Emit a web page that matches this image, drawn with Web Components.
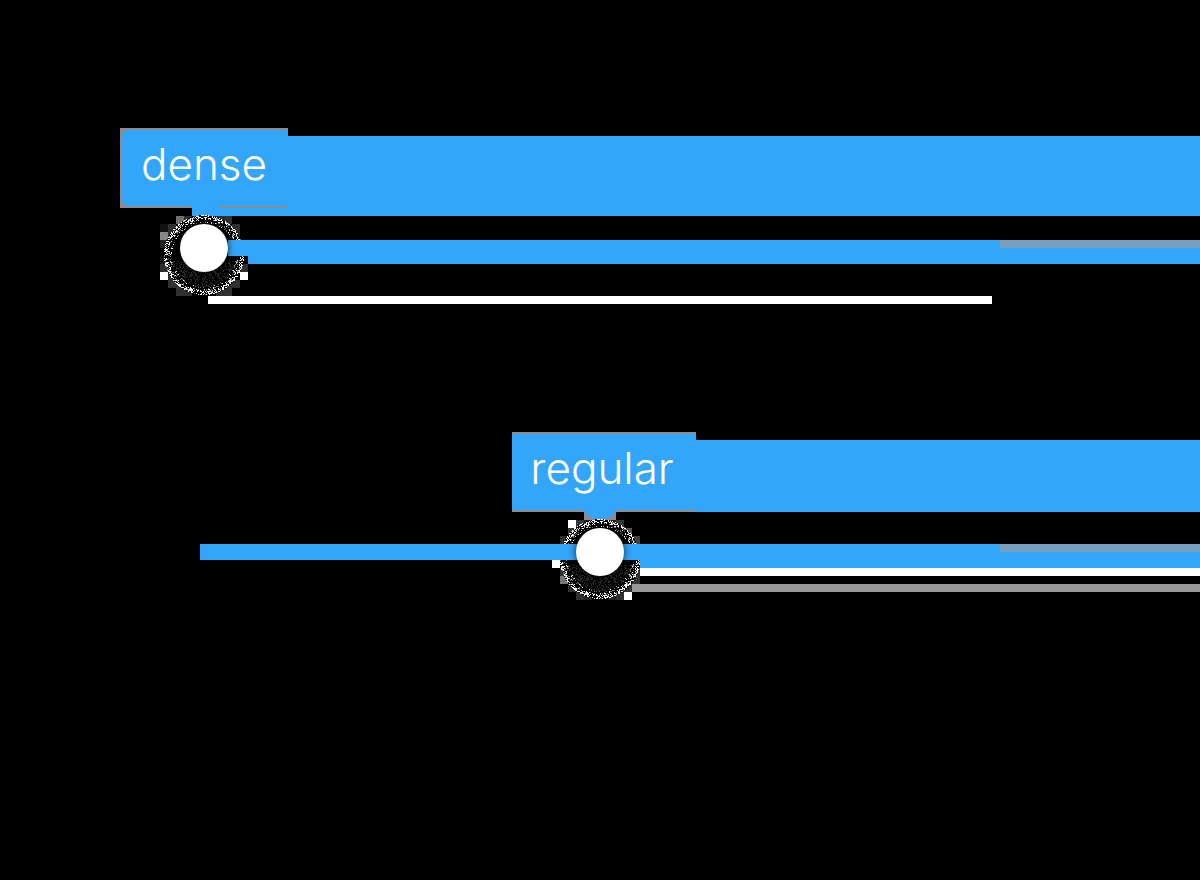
<!DOCTYPE html>
<html lang="en">
<head>
<meta charset="utf-8">
<meta name="viewport" content="width=device-width, initial-scale=1">
<title>Sliders</title>
<style>
  html { background: #000; }
  body { margin: 0; background: #000; font-family: Inter, "Liberation Sans", sans-serif; }
</style>
</head>
<body>
<slider-page>
  <slider-row variant="dense" value="0">dense</slider-row>
  <slider-row variant="regular" value="50">regular</slider-row>
</slider-page>

<template id="page-template">
  <style>
    :host { display: block; }
    main { display: grid; gap: 120px; padding: 128px 0; overflow: hidden; }
  </style>
  <main><slot></slot></main>
</template>

<template id="row-template">
  <style>
    :host {
      display: block; --blue: #33a5fa; --edge: #8c8c8c;
      --tag-start: 10%; --tag-width: 168px; --strip-start: 16%; --strip-height: 80px;
      --bar-start: 19%; --bar-mid: 1.667vw; --thumb: 17%;
    }
    :host([variant="regular"]) {
      --tag-start: 42.667%; --tag-width: 184px; --strip-start: 42.667%; --strip-height: 72px;
      --bar-start: 16.667%; --bar-mid: 36.667vw; --thumb: 50%;
    }
    .callout, .rail { display: grid; }
    .callout > *, .rail > * { grid-area: 1 / 1; }
    .callout { height: 88px; align-items: start; }
    .strip { margin: 8px 0 0 var(--strip-start); height: var(--strip-height); background: var(--blue); }
    .tag {
      position: relative; display: grid; box-sizing: border-box; margin-left: var(--tag-start);
      width: var(--tag-width); height: 80px; padding: 2px 0 2px 2px; background: var(--edge);
    }
    :host([variant="regular"]) .tag { padding-left: 0; }
    label {
      background: var(--blue); border-radius: 6px 0 0 6px; color: #fff; padding-right: 2px;
      font-size: 44px; font-weight: 350; line-height: 68px; text-align: center;
    }
    :host([variant="regular"]) label { border-radius: 0; padding-right: 4px; }
    .pointer { position: absolute; left: 72px; top: 78px; width: 32px; height: 10px; }
    .rail { position: relative; height: 96px; align-items: start; }
    .halo { position: absolute; left: calc(var(--thumb) - 48px); top: -16px; width: 96px; height: 96px; }
    .bars {
      position: relative; display: flex; align-items: flex-start;
      margin-top: 24px; padding-left: var(--bar-start);
    }
    .bars i { flex: 0 0 var(--bar-mid); height: 16px; background: var(--blue); }
    .bars b {
      flex: 1; height: 24px; display: flex; justify-content: flex-end; background: var(--blue);
    }
    .bars u { width: 16.667vw; height: 8px; background: #789fbf; }
    .lines { display: grid; gap: 8px; margin-top: 80px; padding: 0 17.333% 0 17.333%; }
    .lines i { height: 8px; background: #fff; }
    .lines b { display: none; height: 8px; background: #999; }
    :host([variant="regular"]) .lines { margin-top: 48px; padding: 0 0 0 52.667%; }
    :host([variant="regular"]) .lines i { margin-left: 8px; }
    :host([variant="regular"]) .lines b { display: block; }
    input {
      position: relative; appearance: none; width: 70%; height: 48px;
      margin: 8px 15% 0; background: transparent; cursor: pointer;
    }
    input::-webkit-slider-thumb {
      appearance: none; width: 48px; height: 48px; border: 0; border-radius: 50%;
      background: #fff; box-shadow: 0 0 6px 1px rgba(0, 0, 0, .6);
    }
    input:focus-visible { outline: 2px solid #fff; outline-offset: 8px; }
  </style>
  <div class="callout">
    <div class="strip"></div>
    <div class="tag">
      <label for="range"><slot></slot></label>
      <svg class="pointer" viewBox="0 0 32 10" aria-hidden="true"></svg>
    </div>
  </div>
  <div class="rail">
    <svg class="halo" viewBox="0 0 96 96" shape-rendering="crispEdges" aria-hidden="true"></svg>
    <div class="bars"><i></i><b><u></u></b></div>
    <div class="lines"><i></i><b></b></div>
    <input id="range" type="range" min="0" max="100">
  </div>
</template>

<script>
  const clone = id => document.getElementById(id).content.cloneNode(true);

  // Square cells around the grainy ring: x, y, fill, relative to the halo box.
  const cells = {
    dense: [
      [20,16,'#707070'],[28,16,'#303030'],[60,16,'#303030'],[68,16,'#303030'],
      [12,24,'#303030'],[76,24,'#303030'],[4,24,'#111'],[4,32,'#858585'],[12,32,'#303030'],[76,32,'#303030'],
      [4,40,'#222'],[4,56,'#151515'],[4,64,'#303030'],[4,72,'#fff'],[84,64,'#303030'],[84,72,'#fff'],
      [12,72,'#303030'],[12,80,'#303030'],[76,80,'#303030'],[20,80,'#303030'],[68,80,'#303030'],
      [20,88,'#303030'],[28,88,'#303030'],[60,88,'#303030'],[68,88,'#303030']
    ],
    regular: [
      [16,16,'#fff'],[24,16,'#383838'],[32,16,'#222'],[56,16,'#222'],[64,16,'#383838'],
      [16,24,'#383838'],[72,24,'#555'],[8,32,'#303030'],[16,32,'#222'],[80,32,'#444'],
      [0,56,'#fff'],[8,64,'#303030'],[8,72,'#777'],[80,64,'#303030'],[80,72,'#333'],
      [16,80,'#303030'],[72,80,'#303030'],[24,88,'#303030'],[32,88,'#222'],
      [56,88,'#222'],[64,88,'#303030'],[72,88,'#fff']
    ]
  };

  function grain() {
    let seed = 7;
    const random = () => {
      seed = (seed + 0x6d2b79f5) | 0;
      let t = Math.imul(seed ^ (seed >>> 15), 1 | seed);
      t = (t + Math.imul(t ^ (t >>> 7), 61 | t)) ^ t;
      return ((t ^ (t >>> 14)) >>> 0) / 4294967296;
    };
    const dots = { white: '', grey: '', dark: '' };
    for (let y = 15; y < 96; y++) {
      for (let x = 8; x < 88; x++) {
        const r = Math.hypot(x + .5 - 48, y + .5 - 55), n = random();
        if (r > 40) continue;
        const dot = `M${x} ${y}h1v1h-1z`;
        if (r > 36) {
          if (n < .42) dots.white += dot;
          else if (n < .52) dots.grey += dot;
        } else if (r > 32) {
          if (n < .1) dots.white += dot;
          else if (n < .25) dots.grey += dot;
        } else if (y > 60 && n < .35) dots.dark += dot;
      }
    }
    return `<circle cx="48" cy="55" r="40"/>
      <path fill="#fff" d="${dots.white}"/>
      <path fill="#777" d="${dots.grey}"/>
      <path fill="#282828" d="${dots.dark}"/>`;
  }

  customElements.define('slider-page', class extends HTMLElement {
    constructor() {
      super();
      this.attachShadow({ mode: 'open' }).append(clone('page-template'));
    }
  });

  customElements.define('slider-row', class extends HTMLElement {
    constructor() {
      super();
      this.attachShadow({ mode: 'open' }).append(clone('row-template'));
    }
    connectedCallback() {
      const root = this.shadowRoot;
      const variant = this.getAttribute('variant');
      root.querySelector('input').value = this.getAttribute('value');
      root.querySelector('.halo').innerHTML =
        cells[variant].map(([x, y, fill]) =>
          `<rect x="${x}" y="${y}" width="8" height="8" fill="${fill}"/>`).join('') + grain();
      root.querySelector('.pointer').innerHTML = variant === 'dense'
        ? '<path fill="#33a5fa" d="M0 0H28L23 5Q17 10 12 10Q8 10 4 5L0 2z"/>'
        : '<path fill="#8c8c8c" d="M0 2H32V10H0z"/><path fill="#33a5fa" d="M0 0H32V2Q30 3 27 6Q22 10 16 10Q10 10 5 6Q2 3 0 2z"/>';
    }
  });
</script>
</body>
</html>
